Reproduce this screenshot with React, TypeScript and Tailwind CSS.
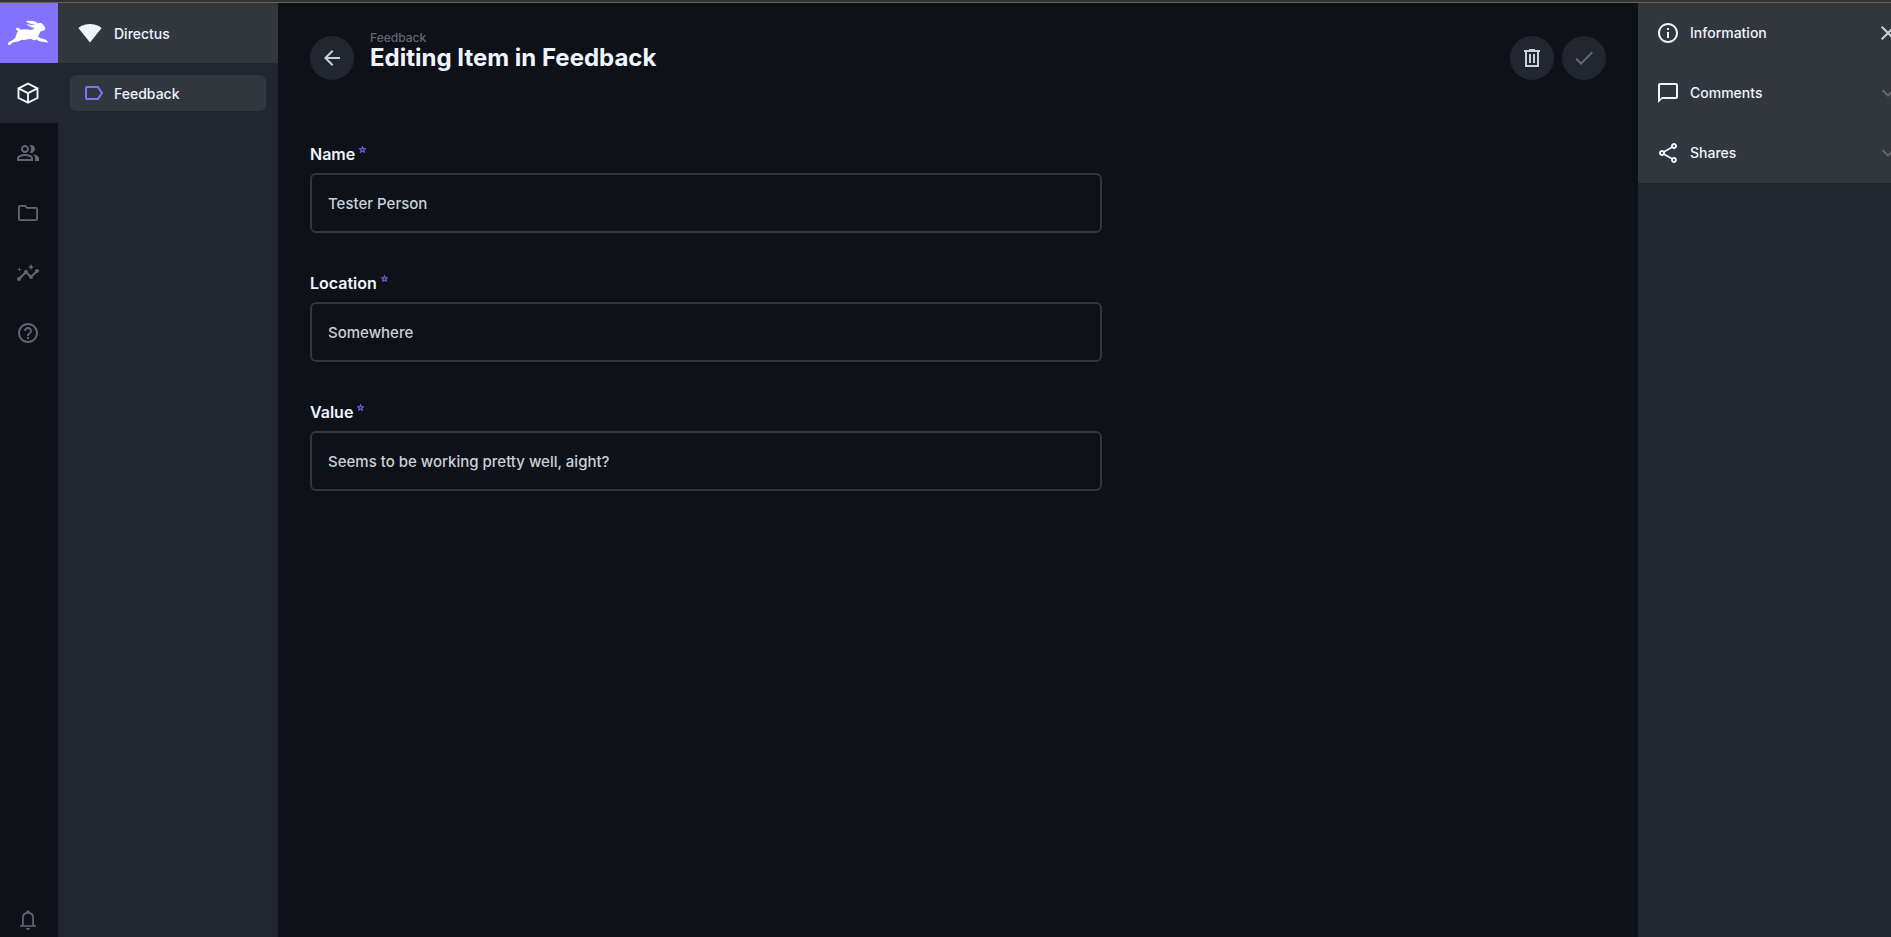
import type { ReactNode } from "react";
import {
  MdOutlinePeopleAlt,
  MdInsights,
  MdHelpOutline,
  MdSignalWifi4Bar,
  MdArrowBack,
  MdCheck,
  MdInfoOutline,
  MdChatBubbleOutline,
  MdOutlineShare,
  MdClose,
  MdExpandMore,
} from "react-icons/md";

function Rabbit() {
  return (
    <svg viewBox="0 0 132 90" className="h-[30px] w-11" fill="#fff" aria-hidden="true">
      <path d="M6 80Q5 75 9 72L20 66Q30 60 31 50Q32 44 37 40Q29 37 30 31Q33 27 40 31L43 35Q56 33 72 35Q82 36 86 30Q76 29 69 24Q64 20 60 17Q70 21 84 21L88 20Q76 19 67 15Q61 12 60 9Q72 7 83 9Q91 11 95 16Q103 12 109 18Q117 24 118 31Q118 38 108 39Q103 40 101 44Q99 51 96 56Q104 62 113 63Q122 64 126 72Q124 75 118 72Q106 72 97 68L91 64Q89 68 82 66Q77 62 70 63L54 66Q50 64 46 66Q38 72 25 72Q18 74 12 80Q9 82 6 80Z" />
    </svg>
  );
}

function BoxIcon() {
  return (
    <svg viewBox="0 0 24 24" className="size-6" fill="none" stroke="currentColor" strokeWidth="1.9" aria-hidden="true">
      <path d="M12 2.6 21.5 7.4V17L12 21.6 2.5 17V7.4ZM2.5 7.4 12 12.2 21.5 7.4M12 12.2V21.6" />
    </svg>
  );
}

function FolderIcon() {
  return (
    <svg viewBox="0 0 24 24" className="size-6" fill="none" stroke="currentColor" strokeWidth="1.8" aria-hidden="true">
      <path d="M4 4.9H9L11 6.9H20Q21.1 6.9 21.1 8V18Q21.1 19.1 20 19.1H4Q2.9 19.1 2.9 18V6Q2.9 4.9 4 4.9Z" />
    </svg>
  );
}

function BellIcon() {
  return (
    <svg viewBox="0 0 24 24" className="size-6" fill="none" stroke="currentColor" strokeWidth="1.7" aria-hidden="true">
      <path d="M4 18H20M6.9 18V10Q6.9 4.9 12 4.9T17.1 10V18" />
      <path d="M12 2.2A1.5 1.5 0 0 1 13.5 3.7V5H10.5V3.7A1.5 1.5 0 0 1 12 2.2ZM10 20H14A2 2 0 0 1 10 20Z" fill="currentColor" stroke="none" />
    </svg>
  );
}

function LabelIcon() {
  return (
    <svg viewBox="0 0 24 24" className="size-6" fill="none" stroke="#8371ff" strokeWidth="2" aria-hidden="true">
      <path d="M5 6H15.8L20 12 15.8 18H5Q4 18 4 17V7Q4 6 5 6Z" />
    </svg>
  );
}

function TrashIcon() {
  return (
    <svg viewBox="0 0 24 24" className="size-6" fill="none" stroke="currentColor" strokeWidth="2" aria-hidden="true">
      <path d="M4 5H20M9 4H15M6 5V20H18V5M10 8V17M14 8V17" />
    </svg>
  );
}

function ModuleLink({ label, active, children }: { label: string; active?: boolean; children: ReactNode }) {
  return (
    <a
      href="#"
      aria-label={label}
      className={`flex h-[60px] shrink-0 items-center pl-4 ${active ? "bg-[#22262e] text-[#f0f4ff]" : "text-[#666672]"}`}
    >
      {children}
    </a>
  );
}

function Field({ id, label, value }: { id: string; label: string; value: string }) {
  return (
    <div>
      <label htmlFor={id} className="mb-[7px] flex h-6 items-center text-base font-semibold text-[#f0f4ff]">
        {label}
        <svg viewBox="0 0 24 24" className="mb-2.5 ml-1 size-[7px]" fill="none" stroke="#6f5fe6" strokeWidth="4" aria-hidden="true">
          <path d="M12 3 14.6 9.3 21.5 9.9 16.3 14.4 17.9 21 12 17.5 6.1 21 7.7 14.4 2.5 9.9 9.4 9.3Z" />
        </svg>
      </label>
      <input
        id={id}
        defaultValue={value}
        className="h-[60px] w-full rounded-md border-2 border-[#32363d] bg-transparent px-4 text-[15px] font-medium text-[#c9d1d9] outline-none focus:border-[#8371ff]"
      />
    </div>
  );
}

function SidebarItem({ icon, label, end }: { icon: ReactNode; label: string; end: ReactNode }) {
  return (
    <button type="button" className="flex h-[60px] w-full items-center bg-[#32363d] pl-[18px] text-[#f0f4ff]">
      {icon}
      <span className="ml-2.5 text-sm font-medium">{label}</span>
      <span className="ml-auto">{end}</span>
    </button>
  );
}

export default function App() {
  return (
    <div className="flex h-screen flex-col overflow-hidden bg-[#0e1118] font-['Inter',sans-serif] text-[#c9d1d9]">
      <div className="h-[3px] shrink-0 border-b border-[#626262] bg-[#333333]" />
      <div className="flex min-h-0 flex-1">
        <nav aria-label="Modules" className="flex w-[58px] shrink-0 flex-col">
          <a href="#" aria-label="Home" className="flex h-[60px] shrink-0 items-center bg-[#8371ff] pl-1.5">
            <Rabbit />
          </a>
          <ModuleLink label="Content" active><BoxIcon /></ModuleLink>
          <ModuleLink label="User directory"><MdOutlinePeopleAlt className="size-6" /></ModuleLink>
          <ModuleLink label="File library"><FolderIcon /></ModuleLink>
          <ModuleLink label="Insights"><MdInsights className="size-6" /></ModuleLink>
          <ModuleLink label="Documentation"><MdHelpOutline className="size-6" /></ModuleLink>
          <button type="button" aria-label="Notifications" className="mt-auto pb-[5px] pl-4 text-[#666672]">
            <BellIcon />
          </button>
        </nav>

        <aside className="w-[220px] shrink-0 bg-[#22262e] text-sm font-medium text-[#f0f4ff]">
          <div className="flex h-[60px] items-center gap-3 bg-[#32363d] pl-5">
            <MdSignalWifi4Bar className="size-6" />
            <span className="pt-0.5">Directus</span>
          </div>
          <div className="p-3">
            <a href="#" className="flex h-9 items-center gap-2 rounded-md bg-[#32363d] pl-3">
              <LabelIcon />
              <span className="pt-0.5">Feedback</span>
            </a>
          </div>
        </aside>

        <main className="min-w-0 flex-1 px-8">
          <header className="flex items-center pt-[27px]">
            <button type="button" aria-label="Back" className="flex size-11 items-center justify-center rounded-full bg-[#22262e]">
              <MdArrowBack className="size-6" />
            </button>
            <div className="mb-4 ml-4">
              <a href="#" className="block text-xs leading-4 font-medium text-[#666672]">Feedback</a>
              <h1 className="text-2xl leading-6 font-bold text-[#f0f4ff]">Editing Item in Feedback</h1>
            </div>
            <div className="ml-auto flex gap-2">
              <button type="button" aria-label="Delete item" className="flex size-11 items-center justify-center rounded-full bg-[#22262e]">
                <TrashIcon />
              </button>
              <button type="button" aria-label="Save" className="flex size-11 items-center justify-center rounded-full bg-[#22262e] text-[#666672]">
                <MdCheck className="size-6" />
              </button>
            </div>
          </header>
          <form className="mt-14 flex max-w-[792px] flex-col gap-[38px]">
            <Field id="name" label="Name" value="Tester Person" />
            <Field id="location" label="Location" value="Somewhere" />
            <Field id="value" label="Value" value="Seems to be working pretty well, aight?" />
          </form>
        </main>

        <aside className="w-[253px] shrink-0 overflow-hidden bg-[#22262e]">
          <div className="w-[262px]">
            <SidebarItem icon={<MdInfoOutline className="size-6" />} label="Information" end={<MdClose className="size-6 text-[#c9d1d9]" />} />
            <SidebarItem icon={<MdChatBubbleOutline className="size-6" />} label="Comments" end={<MdExpandMore className="size-6 text-[#666672]" />} />
            <SidebarItem icon={<MdOutlineShare className="size-6" />} label="Shares" end={<MdExpandMore className="size-6 text-[#666672]" />} />
          </div>
        </aside>
      </div>
    </div>
  );
}
